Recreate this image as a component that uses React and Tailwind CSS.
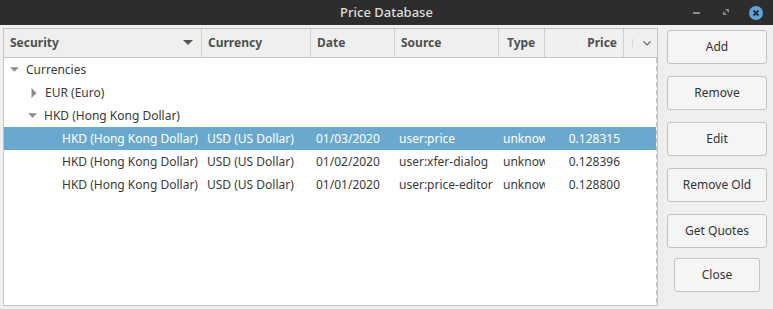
const font = { fontFamily: '"Noto Sans", "Open Sans", sans-serif' }

const rows = [
  { date: '01/03/2020', source: 'user:price', price: '0.128315', selected: true },
  { date: '01/02/2020', source: 'user:xfer-dialog', price: '0.128396' },
  { date: '01/01/2020', source: 'user:price-editor', price: '0.128800' },
]

function Down({ className }) {
  return (
    <svg width="10" height="6" viewBox="0 0 10 6" className={className}>
      <path d="M0 0 L10 0 L5 5 Z" fill="currentColor" />
    </svg>
  )
}

function Right() {
  return (
    <svg width="6" height="10" viewBox="0 0 6 10" className="text-[#8c8c8c]">
      <path d="M0.5 0 L5.5 5 L0.5 10 Z" fill="currentColor" />
    </svg>
  )
}

function Btn({ children, w = 'w-[100px]' }) {
  return (
    <button className={`${w} h-[34px] rounded-[3px] border border-[#c4c4c4] bg-[#f5f5f5] text-[12px] text-[#333333]`}>
      {children}
    </button>
  )
}

export default function App() {
  return (
    <div className="w-[773px] h-[309px] bg-[#efefef] overflow-hidden text-[12px]" style={font}>
      {/* title bar */}
      <div className="h-[25px] bg-[#2d2d2d] flex items-center relative">
        <div className="flex-1 text-center text-[13px] font-medium text-[#dedede] pt-[1px]">Price Database</div>
        <div className="absolute left-[693px] top-[12px] w-[7px] h-[2px] bg-[#8c8c8c]" />
        <svg className="absolute left-[722px] top-[8px]" width="8" height="8" viewBox="0 0 8 8">
          <path d="M3 1 L7 1 L7 5 Z M1 3 L1 7 L5 7 Z" fill="#8c8c8c" />
        </svg>
        <div className="absolute left-[749px] top-[6px] w-[14px] h-[14px] rounded-full bg-[#5ea6d8] flex items-center justify-center">
          <svg width="8" height="8" viewBox="0 0 8 8">
            <path d="M1.5 1.5 L6.5 6.5 M6.5 1.5 L1.5 6.5" stroke="#1f2d3a" strokeWidth="1.8" />
          </svg>
        </div>
      </div>

      <div className="flex pt-[3px] pl-[3px]">
        {/* tree panel */}
        <div className="w-[655px] h-[278px] border border-[#c2c2c2] bg-white flex flex-col">
          {/* header */}
          <div className="h-[29px] flex bg-[#efefef] border-b border-[#c8c8c8] font-bold text-[#4f4f4f]">
            <div className="w-[198px] border-r border-[#cfcfcf] flex items-center pl-[6px] pr-[8px]">
              <span className="flex-1">Security</span>
              <Down className="text-[#555555]" />
            </div>
            <div className="w-[109px] border-r border-[#cfcfcf] flex items-center pl-[6px]">Currency</div>
            <div className="w-[84px] border-r border-[#cfcfcf] flex items-center pl-[6px]">Date</div>
            <div className="w-[104px] border-r border-[#cfcfcf] flex items-center pl-[6px]">Source</div>
            <div className="w-[46px] border-r border-[#cfcfcf] flex items-center pl-[8px]">Type</div>
            <div className="w-[79px] border-r border-[#cfcfcf] flex items-center justify-end pr-[6px]">Price</div>
            <div className="flex-1 flex items-center">
              <div className="w-px h-[8px] bg-[#d4d4d4] ml-[8px]" />
              <svg className="ml-[10px]" width="8" height="5" viewBox="0 0 8 5">
                <path d="M0.5 0.5 L4 4 L7.5 0.5" stroke="#666666" strokeWidth="1.2" fill="none" />
              </svg>
            </div>
          </div>

          {/* body */}
          <div className="flex-1 flex text-[#3a3a3a]">
            <div className="w-[652px]">
              <div className="h-[23px] flex items-center">
                <Down className="ml-[6px] mr-[7px] w-[9px] text-[#8c8c8c]" />
                Currencies
              </div>
              <div className="h-[23px] flex items-center pl-[27px]">
                <Right />
                <span className="ml-[8px]">EUR (Euro)</span>
              </div>
              <div className="h-[23px] flex items-center pl-[24px]">
                <Down className="w-[9px] text-[#8c8c8c]" />
                <span className="ml-[7px]">HKD (Hong Kong Dollar)</span>
              </div>
              {rows.map((r) => (
                <div
                  key={r.date}
                  className={`h-[23px] flex items-center whitespace-nowrap ${r.selected ? 'bg-[#6aa9cd] text-white' : ''}`}
                >
                  <div className="w-[198px] pl-[58px]">HKD (Hong Kong Dollar)</div>
                  <div className="w-[109px] pl-[5px]">USD (US Dollar)</div>
                  <div className="w-[84px] pl-[5px]">{r.date}</div>
                  <div className="w-[104px] pl-[4px]">{r.source}</div>
                  <div className="w-[46px] pl-[4px] overflow-hidden">unknown</div>
                  <div className="w-[79px] text-right pr-[4px]">{r.price}</div>
                </div>
              ))}
            </div>
            <div className="w-px bg-[repeating-linear-gradient(to_bottom,#c4c4c4_0_5px,transparent_5px_8px)]" />
          </div>
        </div>

        {/* buttons */}
        <div className="ml-[9px] pt-[2px] flex flex-col items-center w-[100px]">
          <div className="flex flex-col gap-[12px]">
            <Btn>Add</Btn>
            <Btn>Remove</Btn>
            <Btn>Edit</Btn>
            <Btn>Remove Old</Btn>
            <Btn>Get Quotes</Btn>
          </div>
          <div className="mt-[10px]">
            <Btn w="w-[86px]">Close</Btn>
          </div>
        </div>
      </div>
    </div>
  )
}
